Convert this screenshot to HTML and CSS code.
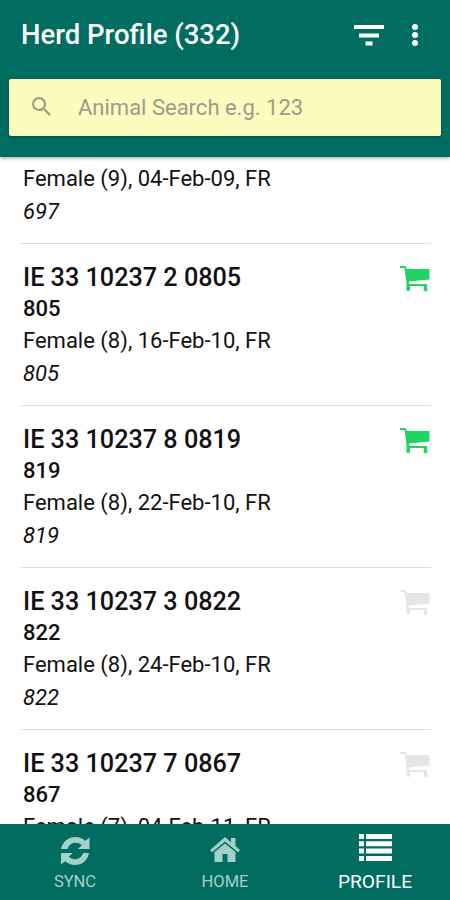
FILE: index.html
```html
<!DOCTYPE html>
<html lang="en">
<head>
    <meta charset="UTF-8" />
    <meta name="viewport" content="width=device-width, initial-scale=1" />
    <title>Herd Profile</title>
    <link rel="stylesheet" href="styles.css">
</head>
<body>

    <header class="header">
        <div class="toolbar">
            <h1>Herd Profile (332)</h1>
            <svg class="filter-icon" viewBox="0 0 30 21"><path d="M0 0h30v4H0zM5 8.500h20v4H5zM11.500 16.500h7v4h-7z"/></svg>
            <svg class="more-icon" viewBox="0 0 6 22"><circle cx="3" cy="3" r="3"/><circle cx="3" cy="11" r="3"/><circle cx="3" cy="19" r="3"/></svg>
        </div>
        <div class="search">
            <svg class="search-icon" viewBox="3 3 17.5 17.5"><path d="M15.5 14h-.79l-.28-.27A6.47 6.47 0 0 0 16 9.5 6.5 6.5 0 1 0 9.5 16c1.61 0 3.09-.59 4.23-1.57l.27.28v.79l5 4.99L20.49 19l-4.99-5zm-6 0C7.01 14 5 11.99 5 9.5S7.01 5 9.5 5 14 7.01 14 9.5 11.99 14 9.5 14z"/></svg>
            <span>Animal Search e.g. 123</span>
        </div>
    </header>

    <main class="list">
        <div class="animal partial">
            <p class="details">Female (9), 04-Feb-09, FR</p>
            <p class="note">697</p>
        </div>

        <div class="animal">
            <h2>IE 33 10237 2 0805</h2>
            <p class="number">805</p>
            <p class="details">Female (8), 16-Feb-10, FR</p>
            <p class="note">805</p>
            <svg class="cart in-cart" viewBox="0 0 30 26"><use href="#cart"/></svg>
        </div>

        <div class="animal">
            <h2>IE 33 10237 8 0819</h2>
            <p class="number">819</p>
            <p class="details">Female (8), 22-Feb-10, FR</p>
            <p class="note">819</p>
            <svg class="cart in-cart" viewBox="0 0 30 26"><use href="#cart"/></svg>
        </div>

        <div class="animal">
            <h2>IE 33 10237 3 0822</h2>
            <p class="number">822</p>
            <p class="details">Female (8), 24-Feb-10, FR</p>
            <p class="note">822</p>
            <svg class="cart" viewBox="0 0 30 26"><use href="#cart"/></svg>
        </div>

        <div class="animal">
            <h2>IE 33 10237 7 0867</h2>
            <p class="number">867</p>
            <p class="details">Female (7), 04-Feb-11, FR</p>
            <svg class="cart" viewBox="0 0 30 26"><use href="#cart"/></svg>
        </div>
    </main>

    <nav class="tabs">
        <div class="tab">
            <svg class="sync-icon" viewBox="0 0 30 29"><path d="M0 12.500C1.500 5 7.500 0 15 0c4 0 7.500 1.500 10.200 4L29.500 .5v12H17.500l4-4C19.500 6.700 17.500 6 15 6c-4 0-7 2.500-8.500 6.500zM29 16.500C27.500 24 22 29 14.500 29c-4 0-7.500-1.500-10.200-4L0 28.500v-12h12l-4 4c2 1.800 4.200 2.500 6.500 2.500 4 0 7-2.500 8.500-6.500z"/></svg>
            <span>SYNC</span>
        </div>
        <div class="tab">
            <svg class="home-icon" viewBox="0 0 30 25"><path d="M15 0L0 13l2 2.300L15 4.500l13 10.800 2-2.300-4.500-4V1h-4.500v4.300zM15 6.500L4.500 15v10h8v-8h5v8h8V15z"/></svg>
            <span>HOME</span>
        </div>
        <div class="tab active">
            <svg class="list-icon" viewBox="0 0 33 27"><path d="M0 0h5v5H0zM7 0h26v5H7zM0 7.300h5v5H0zM7 7.300h26v5H7zM0 14.600h5v5H0zM7 14.600h26v5H7zM0 22h5v5H0zM7 22h26v5H7z"/></svg>
            <span>PROFILE</span>
        </div>
    </nav>

    <svg width="0" height="0" class="defs">
        <symbol id="cart" viewBox="0 0 30 26"><path d="M0 0h5.500l1.500 3h22.500v10.500L9 15.500l.3 2.500H27v4a2 2 0 1 1-3 0v-2H10v2a2 2 0 1 1-3.500 0V17L4.500 2H0z"/></symbol>
    </svg>

</body>
</html>
```
FILE: styles.css
```css
* { box-sizing: border-box; }
body { margin: 0; height: 900px; display: flex; flex-direction: column; overflow: hidden; background: #fff; color: #111; font-family: Roboto, sans-serif; }
h1, h2, p { margin: 0; font-weight: normal; white-space: nowrap; }
svg { display: block; fill: currentColor; flex: none; }

.header { height: 157px; flex: none; padding: 0 9px; background: #006d60; color: #fff; box-shadow: 0 1px 4px rgba(0, 0, 0, 0.4); z-index: 1; }
.toolbar { height: 79px; display: flex; padding: 15px 23px 0 12px; }
.toolbar h1 { flex: 1; font-size: 27.5px; line-height: 40px; font-weight: 500; }
.filter-icon { width: 30px; height: 21px; margin: 10px 28px 0 0; }
.more-icon { width: 6px; height: 22px; margin-top: 9px; }
.search { height: 57px; display: flex; align-items: center; padding-left: 23px; background: #fafbbd; border-radius: 2px; color: #9c9b8c; font-size: 22px; box-shadow: 0 1px 3px rgba(0, 0, 0, 0.3); }
.search-icon { width: 19px; height: 19px; margin: 0 27px 2px 0; }

.list { flex: 1; min-height: 0; overflow: hidden; padding: 0 19px 0 21px; }
.animal { position: relative; height: 162px; padding: 18px 0 0 2px; border-bottom: 1px solid #dedede; }
.animal h2 { font-size: 25.2px; line-height: 32px; font-weight: 500; }
.number { font-size: 22px; line-height: 30px; font-weight: 500; }
.details { font-size: 22px; line-height: 34px; }
.note { font-size: 22px; line-height: 32px; font-style: italic; }
.partial { height: 87px; padding-top: 5px; }
.cart { position: absolute; top: 22px; right: 1px; width: 30px; height: 26px; color: #e6e6e6; }
.in-cart { color: #20d464; }

.tabs { height: 76px; flex: none; display: flex; background: #006d60; color: #a5d0c9; }
.tab { flex: 1; display: flex; flex-direction: column; align-items: center; font-size: 16.5px; line-height: 22px; }
.tab svg { margin-top: 13px; }
.tab span { margin-top: auto; padding-bottom: 7px; }
.sync-icon { width: 29px; height: 28px; }
.home-icon { width: 30px; height: 25px; }
.tab.active { color: #fff; font-size: 19.2px; }
.tab.active svg { margin-top: 10px; }
.list-icon { width: 33px; height: 27px; }
.defs { position: absolute; }
```
